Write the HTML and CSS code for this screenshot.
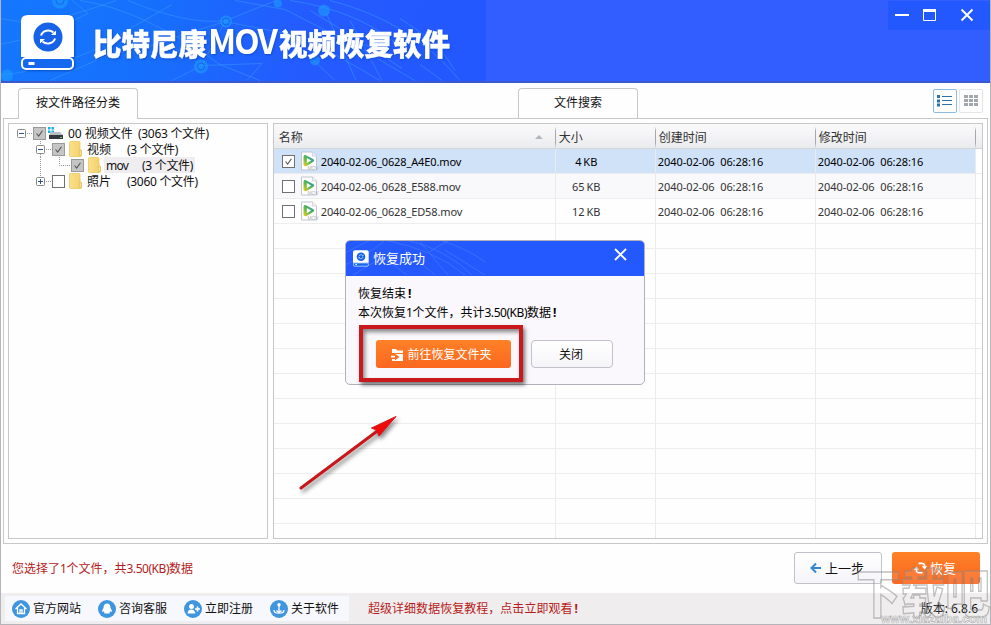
FILE: index.html
```html
<!DOCTYPE html>
<html lang="zh-CN">
<head>
<meta charset="utf-8">
<title>比特尼康MOV视频恢复软件</title>
<link rel="stylesheet" href="styles.css">
</head>
<body>
<svg width="0" height="0" class="defs">
  <defs>
    <linearGradient id="foldG" x1="0" x2="1"><stop offset="0" stop-color="#fbe08a"/><stop offset="1" stop-color="#f3d06c"/></linearGradient>
    <linearGradient id="playG" x1="0" x2="1" y1="1" y2="0"><stop offset="0" stop-color="#f5d020"/><stop offset=".45" stop-color="#59b946"/><stop offset="1" stop-color="#2187d8"/></linearGradient>
    <symbol id="folder" viewBox="0 0 14 16"><path d="M.5 1.500q0-1 1-1h8.500q1 0 1 1v7l1.500 1v5q0 1-1 1h-10q-1 0-1-1z" fill="url(#foldG)" stroke="#ecc965" stroke-width=".8"/><path d="M10.300 9v5.500h2V10z" fill="#fbe9a5" stroke="#d9b34e" stroke-width=".6"/></symbol>
    <symbol id="mov" viewBox="0 0 19 20"><path d="M1.500 1h11l4 4v14h-15z" fill="#fff" stroke="#c3c5ce"/><path d="M12.500 1v4h4" fill="#eef0f5" stroke="#c5c8d0" stroke-width=".7"/><path d="M3.500 6q0-2.500 2.500-1.700l7 3.700q2.400 1.400 0 3L6.500 15q-2.600.8-3-1.600z" fill="url(#playG)"/><path d="M6.800 7v5.200l4.400-2.700z" fill="#fff"/><text x="7.500" y="18.800" font-size="5" font-family="Liberation Sans" fill="#b0b2bc" textLength="11">MOV</text></symbol>
    <symbol id="tick" viewBox="0 0 13 13"><path d="M3 6.500l2.500 3L10 3.200" fill="none" stroke="#555" stroke-width="1.300"/></symbol>
    <symbol id="cycle" viewBox="0 0 16 16"><path d="M5.500 2.200H9.500q3.500 0 3.500 3.500v1M10.500 13.800H6.500Q3 13.800 3 10.300v-1" fill="none" stroke="currentColor" stroke-width="2.200"/><path d="M9.500 5.800h7L13 9.800zM6.500 10.200h-7L3 6.200z" fill="currentColor"/></symbol>
    <symbol id="disk" viewBox="0 0 54 56"><path d="M7 0h40q6 0 6 6v36H0V6q0-6 7-6z" fill="#fff"/><circle cx="27" cy="22" r="14.500" fill="#1763e8"/><path d="M20 20.500a7.500 7 0 0 1 12.500-3M34 23.500a7.500 7 0 0 1-12.500 3" fill="none" stroke="#fff" stroke-width="2"/><path d="M30 20h5v-4.500zM24 24h-5v4.500z" fill="#fff"/><rect x="1" y="43" width="51" height="11" rx="4" fill="#1669ef" stroke="#fff" stroke-width="2"/><rect x="7.500" y="47" width="6" height="3" fill="#fff"/></symbol>
  </defs>
</svg>
<div class="window">
  <header class="header">
    <svg class="pattern" width="486" height="80" viewBox="0 0 486 80">
      <g fill="none" stroke="#3c9bff" stroke-opacity=".5" stroke-width="1">
        <path d="M0 18l38 6 48-14 30-10M0 44q45-8 88-31L70-2M0 75q80-10 132-48L172 4M50 80l60-26 56-12 36 23 60-2-15 17M80 0q60 8 140 64l40 16M128 0q60 25 98 20l50-20M165 40l60-19 60 12 50 47M225 21l-23 44-30 15M235 0l50 9 70 36 60 35M290 0q70 10 112 48M330 0q80 20 130 80M300 34l80 46M356 80L326 12M382 80L350 20M310 10q50 30 92 58M420 64l22 16M400 18q40 24 55 52"/>
      </g>
      <g fill="#1e9cff" opacity=".6"><circle cx="60" cy="0" r="8"/><circle cx="226" cy="21" r="6"/><circle cx="201" cy="66" r="7"/><circle cx="7" cy="75" r="6"/><circle cx="324" cy="10" r="6"/><circle cx="315" cy="60" r="5"/><circle cx="278" cy="3" r="4"/></g>
      <g fill="none" stroke="#1766ee" stroke-width="1"><circle cx="226" cy="21" r="3.500"/><circle cx="201" cy="66" r="3.500"/><circle cx="60" cy="0" r="4"/></g>
    </svg>
    <svg class="logo" width="54" height="56"><use href="#disk"/></svg>
    <svg class="title" width="370" height="56">
      <text x="0" y="41" textLength="114" lengthAdjust="spacingAndGlyphs">比特尼康</text>
      <text x="115" y="40" class="latin" textLength="70" lengthAdjust="spacing">MOV</text>
      <text x="186" y="41" textLength="171" lengthAdjust="spacingAndGlyphs">视频恢复软件</text>
    </svg>
    <div class="controls">
      <svg width="102" height="29" fill="none" stroke="#fff"><path d="M7 14h14" stroke-width="2"/><path d="M35.500 9.500h12v10h-12z"/><path d="M35 9.500h13" stroke-width="3"/><path d="M73.500 8.500l11 11m0-11l-11 11" stroke-width="1.900"/></svg>
    </div>
  </header>

  <nav class="tabs">
    <div class="tab tab-path">按文件路径分类</div>
    <div class="tab tab-search">文件搜索</div>
    <div class="views">
      <svg class="view on" width="24" height="24"><path d="M3 5h3v3H3zM3 9.500h3v3H3zM3 13.500h3v3H3z" fill="#2a72ad"/><path d="M8 6.500h10M8 10.500h10M8 14.500h10" stroke="#2a72ad"/></svg>
      <svg class="view" width="24" height="24"><path d="M4 5h4v3H4zM9 5h4v3H9zM14 5h4v3h-4zM4 9h4v3H4zM9 9h4v3H9zM14 9h4v3h-4zM4 13h4v3H4zM9 13h4v3H9zM14 13h4v3h-4z" fill="#a2a6ad"/></svg>
    </div>
  </nav>

  <main class="main">
    <section class="tree">
      <div class="node">
        <svg width="24" height="16" class="gutter"><path d="M18 8.500h6" class="dots"/><rect x="8.500" y="4.500" width="8" height="8" rx="1"/><path d="M10 8.500h5" class="sign"/></svg>
        <svg class="box grey" width="13" height="13"><use href="#tick"/></svg>
        <svg class="drive" width="15" height="13"><path d="M0 0h2.500v2.500H0zM3.500 0H6v2.500H3.500zM0 3.500h2.500V6H0zM3.500 3.500H6V6H3.500z" fill="#15b2e4"/><path d="M3 5h9l3 3H1z" fill="#b9bec5"/><path d="M1 8h14v4H1z" fill="#34383e"/><path d="M12 10h2v1h-2z" fill="#50e060"/></svg>
        <span class="name n0">00 视频文件</span><span class="count">(3063 个文件)</span>
      </div>
      <div class="node">
        <svg width="43" height="16" class="gutter"><path d="M37 8.500h6M31.500 0v4M31.500 13v3" class="dots"/><rect x="27.500" y="4.500" width="8" height="8" rx="1"/><path d="M29 8.500h5" class="sign"/></svg>
        <svg class="box grey" width="13" height="13"><use href="#tick"/></svg>
        <svg class="folder" width="14" height="16"><use href="#folder"/></svg>
        <span class="name n1">视频</span><span class="count">(3 个文件)</span>
      </div>
      <div class="node">
        <svg width="62" height="16" class="gutter"><path d="M31.500 0v16M50.500 0v8.500h12" class="dots"/></svg>
        <svg class="box grey" width="13" height="13"><use href="#tick"/></svg>
        <svg class="folder" width="14" height="16"><use href="#folder"/></svg>
        <span class="hot"><span class="name n2">mov</span><span class="count">(3 个文件)</span></span>
      </div>
      <div class="node">
        <svg width="43" height="16" class="gutter"><path d="M37 8.500h6M31.500 0v4" class="dots"/><rect x="27.500" y="4.500" width="8" height="8" rx="1"/><path d="M29 8.500h5M31.500 6v5" class="sign"/></svg>
        <svg class="box" width="13" height="13"></svg>
        <svg class="folder" width="14" height="16"><use href="#folder"/></svg>
        <span class="name n1">照片</span><span class="count">(3060 个文件)</span>
      </div>
    </section>

    <section class="list">
      <div class="row head"><div>名称<i class="sort"></i></div><div>大小</div><div>创建时间</div><div>修改时间</div><div></div></div>
      <div class="row sel"><div><svg class="box" width="13" height="13"><use href="#tick"/></svg><svg class="mov" width="19" height="20"><use href="#mov"/></svg><span>2040-02-06_0628_A4E0.mov</span></div><div>4 KB</div><div class="date">2040-02-06  06:28:16</div><div class="date">2040-02-06  06:28:16</div><div></div></div>
      <div class="row alt"><div><svg class="box" width="13" height="13"></svg><svg class="mov" width="19" height="20"><use href="#mov"/></svg><span>2040-02-06_0628_E588.mov</span></div><div>65 KB</div><div class="date">2040-02-06  06:28:16</div><div class="date">2040-02-06  06:28:16</div><div></div></div>
      <div class="row"><div><svg class="box" width="13" height="13"></svg><svg class="mov" width="19" height="20"><use href="#mov"/></svg><span>2040-02-06_0628_ED58.mov</span></div><div>12 KB</div><div class="date">2040-02-06  06:28:16</div><div class="date">2040-02-06  06:28:16</div><div></div></div>
      <div class="row"><div></div><div></div><div></div><div></div><div></div></div>
      <div class="row"><div></div><div></div><div></div><div></div><div></div></div>
      <div class="row"><div></div><div></div><div></div><div></div><div></div></div>
      <div class="row"><div></div><div></div><div></div><div></div><div></div></div>
      <div class="row"><div></div><div></div><div></div><div></div><div></div></div>
      <div class="row"><div></div><div></div><div></div><div></div><div></div></div>
      <div class="row"><div></div><div></div><div></div><div></div><div></div></div>
      <div class="row"><div></div><div></div><div></div><div></div><div></div></div>
      <div class="row"><div></div><div></div><div></div><div></div><div></div></div>
      <div class="row"><div></div><div></div><div></div><div></div><div></div></div>
      <div class="row"><div></div><div></div><div></div><div></div><div></div></div>
      <div class="row"><div></div><div></div><div></div><div></div><div></div></div>
      <div class="row last"><div></div><div></div><div></div><div></div><div></div></div>
    </section>
  </main>

  <div class="actions">
    <p class="status">您选择了<span class="num">1</span>个文件，共<span class="num">3.50(KB)</span>数据</p>
    <div class="btn back"><svg width="12" height="12"><path d="M11 6H2M6 1.500L1.500 6 6 10.500" fill="none" stroke="#3288d4" stroke-width="2"/></svg>上一步</div>
    <div class="btn recover"><svg width="13" height="14"><use href="#cycle"/></svg>恢复</div>
  </div>

  <footer class="footer">
    <div class="links">
      <a><svg width="18" height="18"><circle cx="9" cy="9" r="9"/><path d="M3.500 9L9 4l5.500 5M5.500 8v5.500h7V8" class="ln"/><path d="M8 13v-3h2v3" class="ln"/></svg>官方网站</a>
      <a><svg width="18" height="18"><circle cx="9" cy="9" r="9"/><path d="M9 3.500q3.500 0 3.500 4.500 1.500 2 1.500 4-.8 0-1.300-1-.4 1-1.200 1.600.8.900-.5.900H7q-1.300 0-.5-.9Q5.700 12 5.300 11q-.5 1-1.300 1 0-2 1.500-4 0-4.500 3.500-4.500z" fill="#fff"/></svg>咨询客服</a>
      <a><svg width="18" height="18"><circle cx="9" cy="9" r="9"/><circle cx="7.500" cy="6.500" r="2.500" fill="#fff"/><path d="M3.500 13.500q.3-4 4-4 3 0 4 4z" fill="#fff"/><path d="M13.500 6.500v5M11 9h5" stroke="#fff" stroke-width="1.600"/></svg>立即注册</a>
      <a><svg width="18" height="18"><circle cx="9" cy="9" r="9"/><circle cx="9" cy="4.800" r="1.700" fill="#fff"/><path d="M9 6v6M4 10q0 3.200 5 3.200t5-3.200" class="ln"/><path d="M6.500 10.500l2.500 2 2.500-2" class="ln"/></svg>关于软件</a>
    </div>
    <p class="promo">超级详细数据恢复教程，点击立即观看<b>!</b></p>
    <p class="version">版本: <span>6.8.6</span></p>
  </footer>

  <div class="dialog">
    <div class="dhead">
      <svg class="dpat" width="150" height="35" fill="none" stroke="#4f83ff" stroke-opacity=".5"><path d="M0 13l25-13M0 25Q25 14 40 0M8 35l30-18 24 18M40 0q50 10 80 35M62 0q40 10 65 35M60 10l30 25M75 2l28 33M100 10l40 25M95 0q30 10 45 22M84 12l20-12"/></svg>
      <svg class="dlogo" width="16" height="17"><use href="#disk"/></svg><span>恢复成功</span>
      <svg class="dclose" width="13" height="13"><path d="M1 1l11 11M12 1L1 12" stroke="#fff" stroke-width="1.800"/></svg>
    </div>
    <p>恢复结束<b>!</b></p>
    <p>本次恢复<span class="num">1</span>个文件，共计<span class="num">3.50(KB)</span>数据<b>!</b></p>
    <div class="dbtns">
      <div class="btn go"><svg width="13" height="12"><path d="M1 0h4l1.500 1.500H12V4H1zM4 5h8v7H1v-2h3v1.500L8.500 8 4 4.800v2H0V8.500h4z" fill="#fff"/></svg>前往恢复文件夹</div>
      <div class="btn close">关闭</div>
    </div>
  </div>
  <div class="mark"></div>
  <svg class="arrow" width="120" height="100"><path d="M11 88L88 30.500" stroke="#c9161b" stroke-width="3" stroke-linecap="round"/><path d="M106 16.500L89 36l-2.500-6-5-2z" fill="#f00b0b" stroke="#d31619"/></svg>
  <svg class="watermark" width="140" height="80"><text x="5" y="57" textLength="134" lengthAdjust="spacingAndGlyphs" class="wm-big">下载吧</text><text x="30" y="67" textLength="106" lengthAdjust="spacingAndGlyphs" class="wm-url">www.xiazaiba.com</text></svg>
</div>
</body>
</html>
```
FILE: styles.css
```css
* { box-sizing: border-box; }
body { margin: 0; overflow: hidden; }
p { margin: 0; }
.defs { position: absolute; }
.window { position: relative; width: 991px; height: 625px; display: flex; flex-direction: column; overflow: hidden; background: #fefefe; font: 12px/16px "Noto Sans", "Noto Sans CJK SC", sans-serif; color: #111; border: solid #b5b4b8; border-width: 0 1px 1px; white-space: nowrap; }

.header { position: relative; flex: none; height: 83px; margin: 0 -1px; display: flex; background: #325eff; border-bottom: 2px solid #3b59cc; }
.pattern { position: absolute; left: 0; top: 0; width: 486px; height: 81px; background: linear-gradient(100deg, #1477fe 0, #1670fc 30%, #245bff 62%, #2457ff 100%); }
.logo { position: relative; margin: 15px 0 0 21px; filter: drop-shadow(1px 1px 1px #0a4fc0); }
.title { position: relative; margin: 14px 0 0 18px; overflow: visible; font: 900 30px "Noto Sans CJK SC", sans-serif; fill: #fff; stroke: #fff; stroke-width: .4; filter: drop-shadow(1px 1px 1px #1350d0); }
.title .latin { font: 700 33px "Noto Sans CJK SC", sans-serif; stroke-width: 0; }
.controls { margin: 1px 1px 0 auto; width: 102px; height: 29px; background: #2458ff; }

.tabs { flex: none; height: 36px; display: flex; padding: 5px 6px 0 17px; position: relative; z-index: 1; }
.tab { width: 120px; height: 30px; border: 1px solid #c8c8c8; border-bottom: 0; border-radius: 4px 4px 0 0; text-align: center; line-height: 28px; background: #fefefe; }
.tab-path { height: 31px; }
.tab-search { margin-left: 380px; }
.views { display: flex; gap: 2px; margin: 1px 1px 0 auto; }
.view { border: 1px solid #e3e5e8; border-radius: 2px; }
.view.on { border-color: #8cbbe2; }

.main { flex: none; height: 426px; margin: -1px 2px 0; border: 1px solid #c8c8c8; padding: 4px; display: flex; gap: 5px; }
.tree { width: 260px; border: 1px solid #c8c8c8; padding-top: 1px; }
.node { display: flex; height: 16px; align-items: center; white-space: pre; }
.gutter { fill: #fff; stroke: #8a8a8a; }
.gutter .dots { stroke: #999; stroke-dasharray: 1 1; fill: none; }
.gutter .sign { stroke: #315496; }
.box { flex: none; border: 1px solid #707070; background: #fff; }
.box.grey { background: #c5c5c5; border-color: #999; }
.drive { margin: 0 5px 0 2px; }
.folder { margin: 0 4px 0 4px; }
.name, .count { line-height: 18px; padding-top: 1px; }
.count { letter-spacing: -.3px; }
.n0 { width: 70px; }
.n1 { width: 40px; }
.n2 { width: 36px; display: inline-block; letter-spacing: -.7px; }
.hot { display: flex; align-items: center; background: #efedf0; margin-left: -2px; padding: 0 2px; height: 16px; }

.list { width: 711px; border: 1px solid #c8c8c8; overflow: hidden; }
.row { display: grid; grid-template-columns: 282px 100px 160px 160px 7px; height: 25px; border-bottom: 1px solid #eeedee; font-size: 11px; color: #333; }
.row > div { display: flex; align-items: center; border-right: 1px solid #ebebeb; padding: 2px 0 0 2px; }
.row > div:last-child { border: 0; background: #fff; }
.row > div:first-child { padding: 0 0 0 8px; }
.row > div:first-child span { padding-top: 2px; letter-spacing: -.12px; }
.row > div:nth-child(2) { justify-content: center; padding: 2px 38px 0 0; word-spacing: -1px; }
.row .date { white-space: pre; letter-spacing: -.06px; }
.row .mov { margin: 0 2px 0 5px; }
.row.alt { background: #f9f8fb; }
.row.sel { background: #cfe2f8; color: #000; }
.row.last { height: 15px; border: 0; }
.row.head { background: linear-gradient(#faf9fa, #f4f3f5 50%, #e9ebed); border-bottom-color: #d3d5d8; font-size: 12px; }
.row.head > div { border-right: 1px solid #b2b4b8; border-image: linear-gradient(transparent 15%, #a6a8ac 30%, #a6a8ac 75%, transparent) 1; background: none; padding: 3px 0 0 3px; }
.row.head > div:last-child { border: 0; }
.row.head > div:first-child { padding-left: 5px; }
.row.head > div:nth-child(2) { justify-content: start; padding: 3px 0 0 3px; }
.sort { margin: -2px 12px 0 auto; border: 4px solid transparent; border-top: 0; border-bottom-color: #b4b6ba; }

.actions { flex: none; height: 49px; display: flex; padding: 8px 10px 0 11px; gap: 10px; }
.status { margin: 9px auto 0 0; color: #b31d22; height: 18px; }
.num { font-size: 12px; letter-spacing: -.45px; }
.btn { display: flex; align-items: center; justify-content: center; border-radius: 3px; }
.back { width: 88px; height: 32px; border: 1px solid #bfc2c8; background: linear-gradient(#fff, #f5f5fa); font-size: 13px; gap: 3px; padding-right: 2px; }
.recover { width: 88px; height: 32px; background: linear-gradient(#ff8127, #fb6720); color: #fff; font-size: 13px; gap: 3px; padding-right: 2px; }
.footer { flex: none; height: 31px; background: #f0edef; display: flex; align-items: center; }
.links { flex: none; display: flex; width: 344px; height: 25px; margin: 0 0 0 4px; padding-left: 7px; background: #f6f8fd; }
.links a { flex: none; width: 86px; display: flex; align-items: center; gap: 3px; }
.links svg { flex: none; fill: #3f95de; }
.links .ln { fill: none; stroke: #fff; stroke-width: 1.3; }
.promo { margin: 1px 0 0 19px; color: #b51c20; letter-spacing: .03px; }
.version { margin: 0 12px 0 auto; }
b { font-weight: 700; margin-left: 2px; }

.dialog { position: absolute; left: 344px; top: 240px; width: 300px; height: 145px; background: #faf8fc; border: 1px solid #b1b2b9; border-radius: 5px; overflow: hidden; }
.dhead { position: relative; display: flex; align-items: center; height: 36px; margin: -1px -1px 8px; padding: 0 18px 0 8px; background: #2459ff; color: #fff; font-size: 13px; }
.dpat { position: absolute; left: 0; top: 0; }
.dlogo, .dhead span { position: relative; margin-right: 4px; }
.dclose { margin: -7px 0 0 auto; }
.dialog p { margin-left: 12px; height: 19px; line-height: 19px; color: #000; }
.dbtns { display: flex; gap: 20px; margin: 18px 0 0 30px; }
.go { width: 135px; height: 28px; background: linear-gradient(#ff8127, #fb6720); color: #fff; gap: 3px; padding: 1px 4px 0 0; }
.close { width: 82px; height: 28px; background: linear-gradient(#fff, #f5f5f9); border: 1px solid #c1c2ca; border-radius: 4px; padding: 1px 2px 0 0; }
.mark { position: absolute; left: 358px; top: 325px; width: 164px; height: 57px; border: 4px solid #c9191d; box-shadow: 2px 3px 4px #0008, inset 2px 3px 4px #0007; }
.arrow { position: absolute; left: 289px; top: 400px; filter: drop-shadow(2px 3px 2px #0007); }
.watermark { position: absolute; left: 850px; top: 556px; pointer-events: none; }
.wm-big { font: 900 52px "Noto Sans CJK SC", sans-serif; fill: #fff; fill-opacity: .1; stroke: #888; stroke-opacity: .5; stroke-width: 1.5; }
.wm-url { font: bold 12px "Liberation Sans", sans-serif; fill: #fff; fill-opacity: .7; stroke: #888; stroke-width: .7; stroke-opacity: .6; }
```
